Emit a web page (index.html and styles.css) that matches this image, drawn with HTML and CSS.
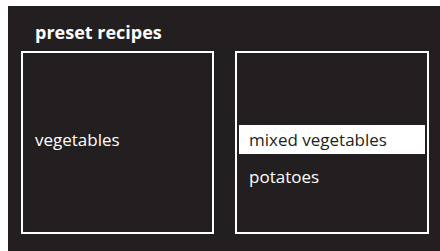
FILE: index.html
```html
<!DOCTYPE html>
<html>
<head>
<meta charset="utf-8">
<link rel="stylesheet" href="styles.css">
</head>
<body>
<div class="panel">
  <h1 class="title">preset recipes</h1>
  <div class="boxes">
    <div class="box box-single">
      <div class="item">vegetables</div>
    </div>
    <div class="box box-list">
      <div class="item selected">mixed vegetables</div>
      <div class="item">potatoes</div>
    </div>
  </div>
</div>
</body>
</html>
```
FILE: styles.css
```css
html, body {
  margin: 0;
  padding: 0;
  background: #ffffff;
}
body {
  width: 440px;
  height: 251px;
  overflow: hidden;
  font-family: "Open Sans", "Noto Sans", sans-serif;
}
.panel {
  margin: 6px 0 0 8px;
  width: 432px;
  height: 245px;
  background: #231f20;
  color: #ffffff;
  box-sizing: border-box;
  padding: 0 0 0 13px;
}
.title {
  margin: 0;
  padding: 14px 0 0 14px;
  height: 45px;
  box-sizing: border-box;
  font-size: 18px;
  font-weight: 700;
  line-height: 24px;
}
.boxes {
  display: flex;
  gap: 21px;
}
.box {
  width: 193px;
  height: 183px;
  border: 2px solid #ffffff;
  box-sizing: border-box;
  display: flex;
  flex-direction: column;
}
.box-single {
  justify-content: center;
  padding: 0 12px 6px 12px;
}
.box-list {
  width: 194px;
  padding: 72px 2px 0 2px;
}
.item {
  font-size: 17px;
  line-height: 29px;
  height: 29px;
  white-space: nowrap;
}
.box-list .item {
  padding-left: 10px;
  margin-bottom: 8px;
}
.selected {
  background: #ffffff;
  color: #231f20;
}
```
